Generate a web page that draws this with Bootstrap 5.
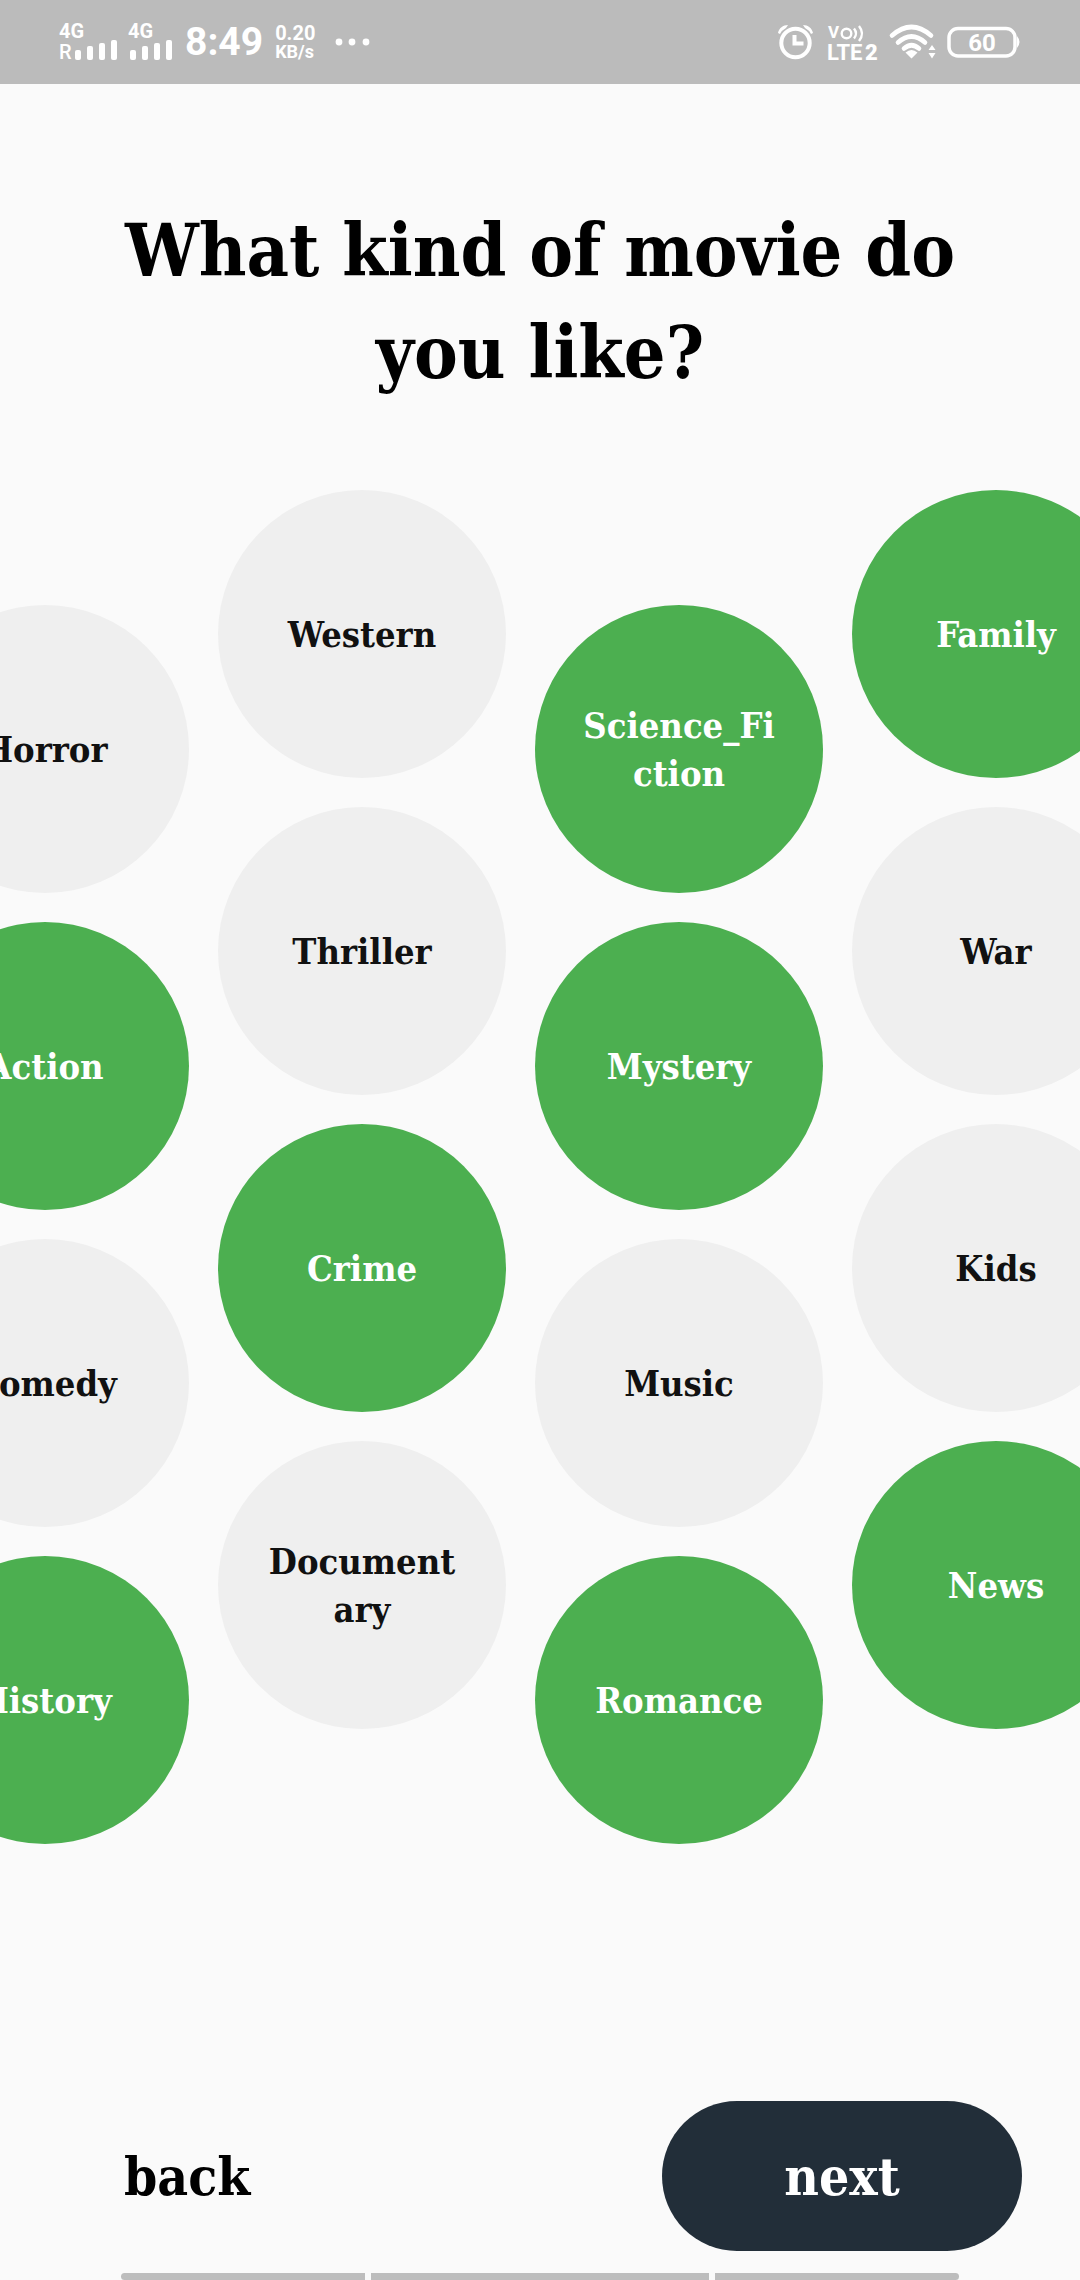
<!DOCTYPE html>
<html lang="en">
<head>
<meta charset="utf-8">
<meta name="viewport" content="width=device-width, initial-scale=1">
<title>Movie genres</title>
<link href="https://cdn.jsdelivr.net/npm/bootstrap@5.3.0/dist/css/bootstrap.min.css" rel="stylesheet">
<style>
  body { background: #fafafa; color: #000; font-family: "DejaVu Serif Condensed", "DejaVu Serif", serif; }
  .status-strip { background: #bbb; color: #fff; height: 84px; padding: 0 60px 0 59px; font-family: Roboto, sans-serif; }
  .status-strip svg { display: block; fill: currentColor; overflow: visible; }
  .clock { font-size: 39px; line-height: 48px; }
  .net-speed { font-size: 20px; line-height: 20px; }
  .net-unit { font-size: 18px; line-height: 18px; }
  .status-icons { gap: 10px; }
  .more-dots { margin-left: 20px; }
  .question { font-size: 73px; line-height: 102px; padding: 115px 96px 0; }
  .genre-field { padding-top: 87px; }
  .genre-cols { gap: 29px; margin-left: -99px; }
  .genre-col { gap: 29px; }
  .genre-col.is-low { padding-top: 115px; }
  .bubble { width: 288px; height: 288px; padding: 0 40px; background: #efefef; color: #111; font-size: 36px; line-height: 48px; cursor: pointer; }
  .btn-check:checked + .bubble { background: #4caf50; color: #fff; }
  .btn-check:focus-visible + .bubble { outline: 4px solid #222e39; }
  .actions { padding: 0 58px 22px 124px; }
  .action { font-size: 53px; line-height: 60px; }
  .action-next { width: 360px; height: 150px; background: #222e39; }
  .nav-hint { width: 838px; gap: 6px; }
  .nav-hint span { height: 7px; background: #bdbdbd; flex: 244 1 0; }
  .nav-hint .mid { flex-grow: 338; }
</style>
</head>
<body class="d-flex flex-column min-vh-100 overflow-x-hidden">
<header class="status-strip d-flex justify-content-between align-items-center">
  <div class="d-flex align-items-center">
    <svg width="60" height="46" viewBox="0 -3 60 46" class="me-2" role="img" aria-label="Signal, roaming">
      <text x="0" y="16" font-size="20" font-weight="700">4G</text>
      <text x="0" y="37" font-size="20" font-weight="500">R</text>
      <rect x="16" y="28" width="6" height="10" rx="2"/><rect x="28" y="24" width="6" height="14" rx="2"/><rect x="40" y="21" width="6" height="17" rx="2"/><rect x="52" y="18" width="6" height="20" rx="2"/>
    </svg>
    <svg width="46" height="46" viewBox="0 -3 46 46" class="me-2" role="img" aria-label="Signal">
      <text x="1" y="16" font-size="20" font-weight="700">4G</text>
      <rect x="3" y="28" width="6" height="10" rx="2"/><rect x="15" y="24" width="6" height="14" rx="2"/><rect x="27" y="21" width="6" height="17" rx="2"/><rect x="39" y="18" width="6" height="20" rx="2"/>
    </svg>
    <div class="clock fw-bold ms-1">8:49</div>
    <div class="ms-2 ps-1 fw-bold">
      <div class="net-speed">0.20</div>
      <div class="net-unit">KB/s</div>
    </div>
    <svg width="36" height="8" viewBox="0 0 36 8" class="more-dots" aria-hidden="true"><circle cx="4" cy="4" r="3.400"/><circle cx="17" cy="4" r="3.400"/><circle cx="31" cy="4" r="3.400"/></svg>
  </div>
  <div class="status-icons d-flex align-items-center">
    <svg width="35" height="36" viewBox="0 0 35 36" role="img" aria-label="Alarm">
      <g fill="none" stroke="currentColor"><circle cx="17.500" cy="19" r="14.200" stroke-width="4"/><path d="M16.500 11v8.500h9" stroke-width="4"/></g>
      <path d="M0 9C1 4 5 1 10 1L8 4Q4 6 2 10ZM35 9C34 4 30 1 25 1L27 4Q31 6 33 10Z"/>
    </svg>
    <svg width="56" height="46" viewBox="-5 -4 56 46" role="img" aria-label="VoLTE 2">
      <text x="0" y="15" font-size="17" font-weight="700">V</text>
      <g fill="none" stroke="currentColor" stroke-width="2.400"><circle cx="18.500" cy="10.500" r="4.800"/><path d="M26 5.500q4 5 0 10M31 3q6 7.500 0 15"/></g>
      <text x="-1" y="37" font-size="22" font-weight="700">LTE</text><text x="37" y="37" font-size="22" font-weight="900">2</text>
    </svg>
    <svg width="48" height="36" viewBox="0 0 48 36" role="img" aria-label="Wi-Fi">
      <g fill="none" stroke="currentColor" stroke-width="4.600" stroke-linecap="round"><path d="M3 11.500Q22.500-5.500 42 11.500M9 18.500q13.500-12 27 0M15 24.500q7.500-6.500 15 0"/></g>
      <path d="M16.500 28.500q6-5 12 0l-6 6ZM39.500 26l3.500-5 3.500 5ZM39.500 29h7l-3.500 5.500Z"/>
    </svg>
    <svg width="73" height="32" viewBox="0 0 73 32" role="img" aria-label="Battery 60">
      <rect x="2" y="2.500" width="66" height="27.500" rx="9" fill="none" stroke="currentColor" stroke-width="3.500"/>
      <path d="M70 10q5 6 0 12Z"/>
      <text x="35" y="25" font-size="24" font-weight="700" text-anchor="middle">60</text>
    </svg>
  </div>
</header>

<main class="flex-grow-1">
  <h1 class="question text-center fw-bold m-0">What kind of movie do you like?</h1>
  <div class="genre-field overflow-hidden">
    <div class="genre-cols d-flex">
      <div class="genre-col is-low d-flex flex-column">
        <input class="btn-check" type="checkbox" id="horror"><label class="bubble rounded-circle d-flex align-items-center justify-content-center text-center fw-bold flex-shrink-0" for="horror">Horror</label>
        <input class="btn-check" type="checkbox" id="action" checked><label class="bubble rounded-circle d-flex align-items-center justify-content-center text-center fw-bold flex-shrink-0" for="action">Action</label>
        <input class="btn-check" type="checkbox" id="comedy"><label class="bubble rounded-circle d-flex align-items-center justify-content-center text-center fw-bold flex-shrink-0" for="comedy">Comedy</label>
        <input class="btn-check" type="checkbox" id="history" checked><label class="bubble rounded-circle d-flex align-items-center justify-content-center text-center fw-bold flex-shrink-0" for="history">History</label>
      </div>
      <div class="genre-col d-flex flex-column">
        <input class="btn-check" type="checkbox" id="western"><label class="bubble rounded-circle d-flex align-items-center justify-content-center text-center fw-bold flex-shrink-0" for="western">Western</label>
        <input class="btn-check" type="checkbox" id="thriller"><label class="bubble rounded-circle d-flex align-items-center justify-content-center text-center fw-bold flex-shrink-0" for="thriller">Thriller</label>
        <input class="btn-check" type="checkbox" id="crime" checked><label class="bubble rounded-circle d-flex align-items-center justify-content-center text-center fw-bold flex-shrink-0" for="crime">Crime</label>
        <input class="btn-check" type="checkbox" id="documentary"><label class="bubble rounded-circle d-flex align-items-center justify-content-center text-center fw-bold flex-shrink-0" for="documentary"><span>Document<wbr>ary</span></label>
      </div>
      <div class="genre-col is-low d-flex flex-column">
        <input class="btn-check" type="checkbox" id="scifi" checked><label class="bubble rounded-circle d-flex align-items-center justify-content-center text-center fw-bold flex-shrink-0" for="scifi"><span>Science_Fi<wbr>ction</span></label>
        <input class="btn-check" type="checkbox" id="mystery" checked><label class="bubble rounded-circle d-flex align-items-center justify-content-center text-center fw-bold flex-shrink-0" for="mystery">Mystery</label>
        <input class="btn-check" type="checkbox" id="music"><label class="bubble rounded-circle d-flex align-items-center justify-content-center text-center fw-bold flex-shrink-0" for="music">Music</label>
        <input class="btn-check" type="checkbox" id="romance" checked><label class="bubble rounded-circle d-flex align-items-center justify-content-center text-center fw-bold flex-shrink-0" for="romance">Romance</label>
      </div>
      <div class="genre-col d-flex flex-column">
        <input class="btn-check" type="checkbox" id="family" checked><label class="bubble rounded-circle d-flex align-items-center justify-content-center text-center fw-bold flex-shrink-0" for="family">Family</label>
        <input class="btn-check" type="checkbox" id="war"><label class="bubble rounded-circle d-flex align-items-center justify-content-center text-center fw-bold flex-shrink-0" for="war">War</label>
        <input class="btn-check" type="checkbox" id="kids"><label class="bubble rounded-circle d-flex align-items-center justify-content-center text-center fw-bold flex-shrink-0" for="kids">Kids</label>
        <input class="btn-check" type="checkbox" id="news" checked><label class="bubble rounded-circle d-flex align-items-center justify-content-center text-center fw-bold flex-shrink-0" for="news">News</label>
      </div>
    </div>
  </div>
</main>

<footer>
  <div class="actions d-flex justify-content-between align-items-center">
    <button type="button" class="action border-0 bg-transparent p-0 fw-bold text-black">back</button>
    <button type="button" class="action action-next border-0 rounded-pill fw-bold text-white">next</button>
  </div>
  <div class="nav-hint d-flex mx-auto mw-100" aria-hidden="true">
    <span class="rounded-start"></span><span class="mid"></span><span class="rounded-end"></span>
  </div>
</footer>
<script src="https://cdn.jsdelivr.net/npm/bootstrap@5.3.0/dist/js/bootstrap.bundle.min.js"></script>
</body>
</html>
